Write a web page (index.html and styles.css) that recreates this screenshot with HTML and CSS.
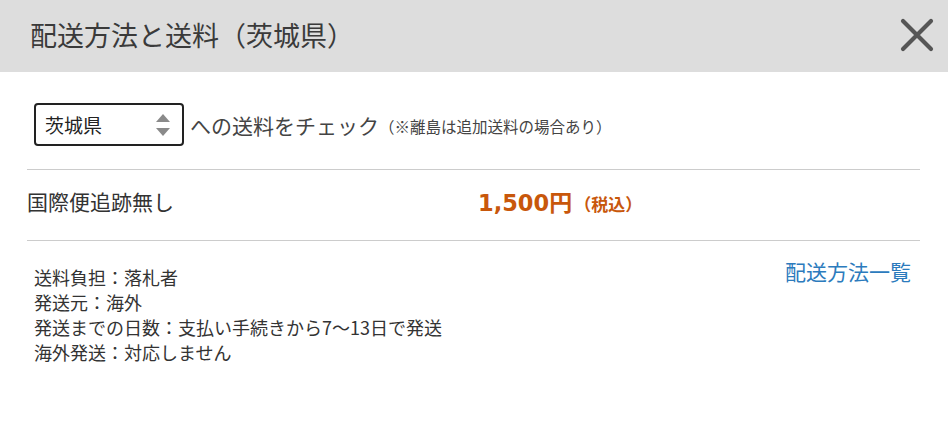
FILE: index.html
```html
<!DOCTYPE html>
<html lang="ja">
    <head>
        <meta charset="utf-8" />
        <title>配送方法と送料</title>
        <link rel="stylesheet" href="styles.css">
    </head>
    <body>
        <div class="modal">
            <div class="modal-head">
                <h1>配送方法と送料（茨城県）</h1>
                <span class="close">
                    <svg width="34" height="34" viewBox="0 0 34 34">
                        <path d="M3 3 L31 31 M31 3 L3 31" stroke="#555" stroke-width="4.2" stroke-linecap="round" fill="none"/>
                    </svg>
                </span>
            </div>

            <div class="modal-body">
                <div class="check-row">
                    <div class="pref-select">
                        <span>茨城県</span>
                        <svg class="arrows" width="16" height="26" viewBox="0 0 16 26">
                            <path d="M8 2 L15 10 L1 10 Z" fill="#8a8a8a"/>
                            <path d="M8 24 L15 16 L1 16 Z" fill="#8a8a8a"/>
                        </svg>
                    </div>
                    <span class="check-text">への送料をチェック</span>
                    <span class="note">（※離島は追加送料の場合あり）</span>
                </div>

                <div class="method-row">
                    <span class="method-name">国際便追跡無し</span>
                    <span class="price"><b>1,500</b>円<small>（税込）</small></span>
                </div>

                <div class="detail">
                    <ul>
                        <li>送料負担：落札者</li>
                        <li>発送元：海外</li>
                        <li>発送までの日数：支払い手続きから7〜13日で発送</li>
                        <li>海外発送：対応しません</li>
                    </ul>
                    <a href="#">配送方法一覧</a>
                </div>
            </div>
        </div>
    </body>
</html>
```

FILE: styles.css
```css
body {
    margin: 0;
    background-color: white;
    font-family: "Noto Sans CJK JP", sans-serif;
    color: #333;
}

.modal-head {
    height: 72px;
    background-color: #ddd;
    display: flex;
    align-items: center;
    justify-content: space-between;
    padding: 0 14px 0 30px;
}

.modal-head h1 {
    margin: 0;
    font-size: 27px;
    font-weight: normal;
    color: #3a3a3a;
    position: relative;
    top: -2px;
}

.close {
    display: flex;
    position: relative;
    top: -1px;
}

.modal-body {
    padding: 0 28px 0 27px;
}

.check-row {
    display: flex;
    align-items: center;
    padding: 31px 0 23px 7px;
    border-bottom: 1px solid #ccc;
}

.pref-select {
    height: 39px;
    width: 126px;
    border: 2px solid #222;
    border-radius: 4px;
    display: flex;
    align-items: center;
    justify-content: space-between;
    padding: 0 11px 0 9px;
    box-sizing: content-box;
    font-size: 19px;
    color: #222;
}

.check-text {
    margin-left: 6px;
    font-size: 21px;
    color: #444;
}

.note {
    font-size: 15.5px;
    color: #444;
    position: relative;
    top: 1px;
}

.method-row {
    display: grid;
    grid-template-columns: 451px auto;
    align-items: center;
    height: 70px;
    border-bottom: 1px solid #ccc;
}

.method-name {
    font-size: 21px;
    color: #333;
    position: relative;
    top: -4px;
}

.price {
    color: #c8570b;
    font-weight: bold;
    font-size: 23px;
    position: relative;
    top: -4px;
}

.price b {
    font-family: "DejaVu Sans", sans-serif;
    font-size: 22.5px;
}

.price small {
    font-size: 17px;
    margin-left: 2px;
}

.detail {
    display: flex;
    justify-content: space-between;
    padding: 24px 9px 0 7px;
}

.detail ul {
    list-style: none;
    margin: 0;
    padding: 0;
    font-size: 18px;
    line-height: 25px;
    color: #333;
}

.detail a {
    font-size: 21px;
    color: #2c7bbd;
    text-decoration: none;
    position: relative;
    top: -9px;
}
```
